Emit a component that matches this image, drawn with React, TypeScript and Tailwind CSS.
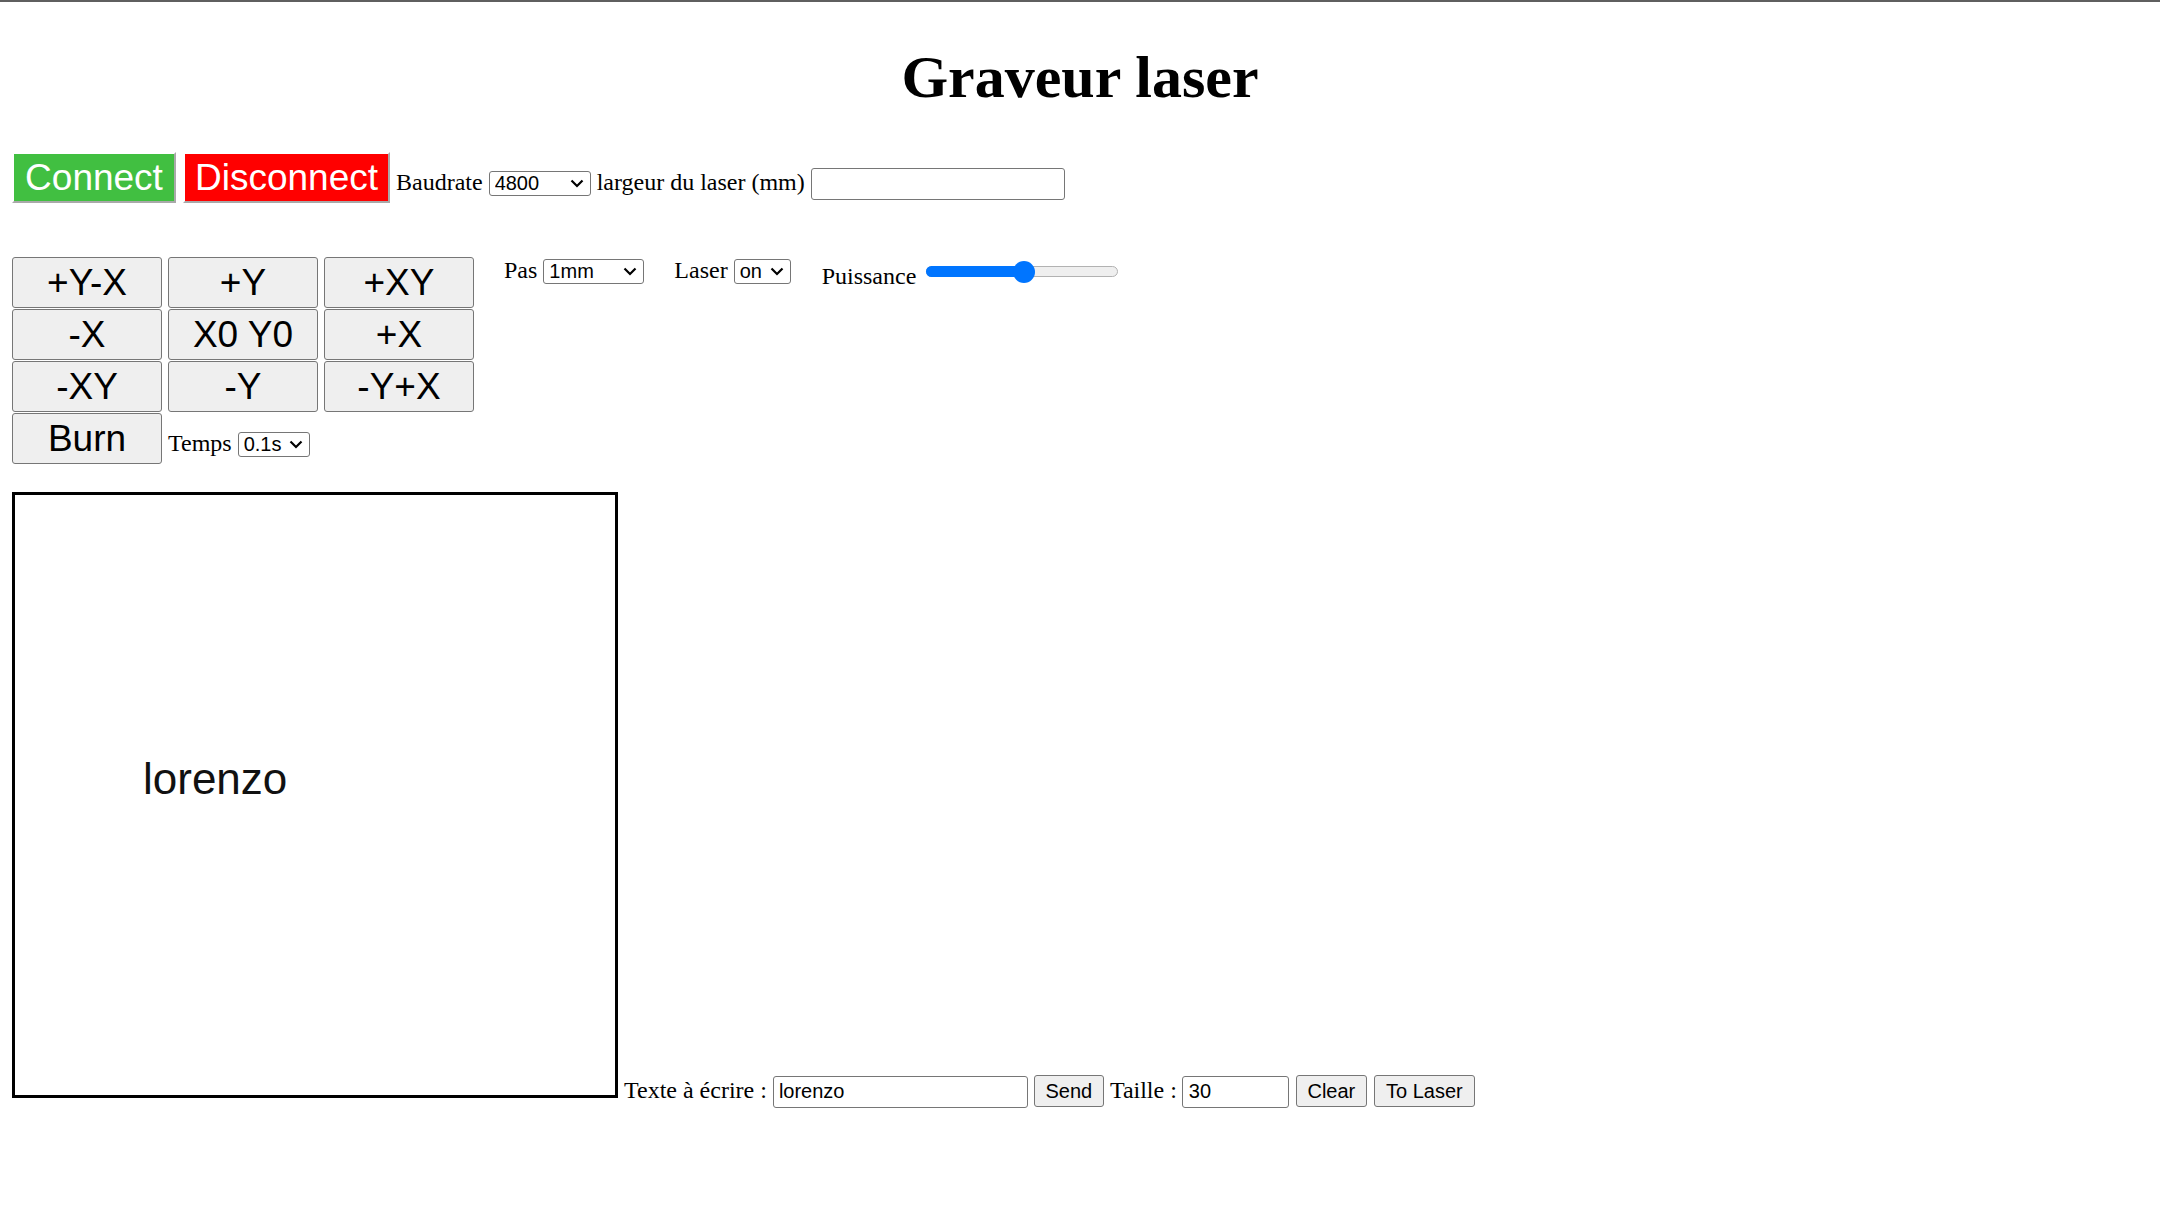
import React from 'react';

const serif = "font-['Liberation_Serif','Times_New_Roman',serif]";
const sans = "font-['Liberation_Sans',Arial,sans-serif]";

const Chevron = () => (
  <svg width="14" height="9" viewBox="0 0 14 9" className="pointer-events-none absolute right-[7px] top-[8px]">
    <path d="M1.5 1.5 L7 7 L12.5 1.5" fill="none" stroke="#000" strokeWidth="2.2" />
  </svg>
);

const Select = ({ options, width }: { options: string[]; width: string }) => (
  <span className="relative inline-flex">
    <select
      className={`${sans} ${width} h-[25px] appearance-none rounded-[3px] border border-[#767676] bg-white pl-[5px] text-[20px] leading-[23px] text-black outline-none`}
      defaultValue={options[0]}
    >
      {options.map((o) => (
        <option key={o}>{o}</option>
      ))}
    </select>
    <Chevron />
  </span>
);

const JogButton = ({ label }: { label: string }) => (
  <button className={`${sans} h-[51px] w-[150px] rounded-[3px] border border-[#767676] bg-[#efefef] text-center text-[37px] leading-[49px] text-black`}>
    {label}
  </button>
);

const SmallButton = ({ label, width }: { label: string; width: string }) => (
  <button className={`${sans} ${width} h-[32px] rounded-[3px] border border-[#767676] bg-[#efefef] text-center text-[20px] leading-[30px] text-black`}>
    {label}
  </button>
);

const jog = ['+Y-X', '+Y', '+XY', '-X', 'X0 Y0', '+X', '-XY', '-Y', '-Y+X'];

export default function App() {
  return (
    <div className={`${serif} min-h-[1226px] bg-white text-black`}>
      <div className="h-[2px] bg-[#5f5f5f]" />
      <div className="px-[12px]">
        <h1 className="mt-[41px] text-center text-[60px] font-bold leading-[69px]">Graveur laser</h1>

        {/* connexion */}
        <div className="mt-[40px] flex items-baseline text-[24px]">
          <button className={`${sans} h-[51px] w-[164px] border-2 border-b-[#a9a9a9] border-l-white border-r-[#a9a9a9] border-t-white bg-[#41bf41] text-center text-[37px] leading-[47px] text-white`}>
            Connect
          </button>
          <button className={`${sans} ml-[7px] h-[51px] w-[207px] border-2 border-b-[#a9a9a9] border-l-white border-r-[#a9a9a9] border-t-white bg-[#ff0000] text-center text-[37px] leading-[47px] text-white`}>
            Disconnect
          </button>
          <span className="ml-[6px]">Baudrate</span>
          <span className="ml-[6px] inline-flex">
            <Select options={['4800', '9600', '19200', '38400', '57600', '115200']} width="w-[102px]" />
          </span>
          <span className="ml-[6px]">largeur du laser (mm)</span>
          <input
            className={`${sans} ml-[6px] h-[32px] w-[254px] rounded-[3px] border border-[#767676] bg-white px-[5px] text-[20px] outline-none`}
          />
        </div>

        {/* commandes */}
        <div className="mt-[54px] flex items-start text-[24px]">
          <div className="flex flex-col">
            <div className="grid grid-cols-[150px_150px_150px] gap-x-[6px] gap-y-[1px]">
              {jog.map((j) => (
                <JogButton key={j} label={j} />
              ))}
            </div>
            <div className="mt-[1px] flex items-baseline">
              <JogButton label="Burn" />
              <span className="ml-[6px]">Temps</span>
              <span className="ml-[6px] inline-flex">
                <Select options={['0.1s', '0.5s', '1s', '2s']} width="w-[72px]" />
              </span>
            </div>
          </div>

          <div className="-mt-[5px] ml-[30px] flex items-baseline">
            <span>Pas</span>
            <span className="ml-[6px] inline-flex">
              <Select options={['1mm', '5mm', '10mm']} width="w-[101px]" />
            </span>
          </div>

          <div className="-mt-[5px] ml-[30px] flex items-baseline">
            <span>Laser</span>
            <span className="ml-[6px] inline-flex">
              <Select options={['on', 'off']} width="w-[57px]" />
            </span>
          </div>

          <div className="ml-[31px] flex items-start">
            <span className="mt-[5px] leading-[28px]">Puissance</span>
            <div className="relative ml-[10px] mt-[4px] h-[22px] w-[192px]">
              <div className="absolute left-0 right-0 top-[5px] h-[11px] rounded-full border border-[#b2b2b2] bg-[#efefef]" />
              <div className="absolute left-0 top-[5px] h-[11px] w-[98px] rounded-l-full bg-[#0075ff]" />
              <div className="absolute left-[87px] top-0 h-[22px] w-[22px] rounded-full bg-[#0075ff]" />
            </div>
          </div>
        </div>

        {/* zone de dessin */}
        <div className="mt-[28px] flex items-baseline text-[24px]">
          <div className="relative h-[606px] w-[606px] shrink-0 border-[3px] border-black bg-white">
            <span className={`${sans} absolute left-[128px] top-[262px] whitespace-nowrap text-[44px] leading-[44px] text-[#111]`}>
              lorenzo
            </span>
          </div>
          <span className="ml-[6px]">Texte à écrire :</span>
          <input
            defaultValue="lorenzo"
            className={`${sans} ml-[6px] h-[32px] w-[255px] rounded-[3px] border border-[#767676] bg-white px-[5px] text-[20px] outline-none`}
          />
          <span className="ml-[6px]">
            <SmallButton label="Send" width="w-[70px]" />
          </span>
          <span className="ml-[6px]">Taille :</span>
          <input
            defaultValue="30"
            className={`${sans} ml-[5px] h-[32px] w-[107px] rounded-[3px] border border-[#767676] bg-white px-[6px] text-[20px] outline-none`}
          />
          <span className="ml-[7px]">
            <SmallButton label="Clear" width="w-[71px]" />
          </span>
          <span className="ml-[7px]">
            <SmallButton label="To Laser" width="w-[101px]" />
          </span>
        </div>
      </div>
    </div>
  );
}
